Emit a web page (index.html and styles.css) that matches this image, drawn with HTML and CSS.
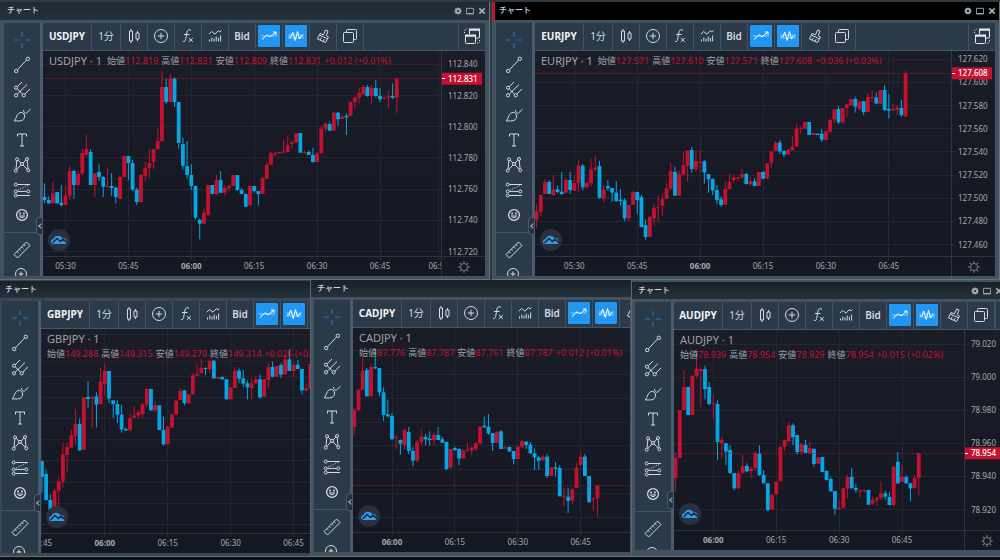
FILE: index.html
```html
<!DOCTYPE html>
<html lang="en">
<head>
<meta charset="utf-8">
<title>チャート</title>
<link rel="stylesheet" href="styles.css">
</head>
<body>
<svg class="sprite" aria-hidden="true">
  <defs>
    <symbol id="i-cross" viewBox="-9 -9 18 18"><path d="M-8 0H-3M3 0H8M0-8V-3M0 3V8"/></symbol>
    <symbol id="i-line" viewBox="-9 -9 18 18"><path d="M-4.5 4.7L4.5-4.9"/><circle cx="-5.8" cy="6" r="1.7"/><circle cx="5.8" cy="-6.2" r="1.7"/></symbol>
    <symbol id="i-fork" viewBox="-9 -9 18 18"><path d="M-4.7-3.4L0-8M-4.8-1.2L.6 4.2M-4.8 4.2L5-5.5M3 4L8-1.2M-2 2L-2 1"/><circle cx="-6" cy="-2.3" r="1.6"/><circle cx="-6" cy="5.3" r="1.6"/><circle cx="1.7" cy="5.3" r="1.6"/></symbol>
    <symbol id="i-brush" viewBox="-9 -9 18 18"><path d="M-8 5.8C-5 4-6-2.6-.4-2.6C3.4-1.6 3.6 3.4 0 5.4C-2 6.2-5 6-8 5.8ZM1.5-5C1.5-2.5 3-1.2 4.5-2L8.5-5.8"/></symbol>
    <symbol id="i-text" viewBox="-9 -9 18 18"><path d="M-4.5-3.5V-6H4.5V-3.5M0-6V6M-2 6H2"/></symbol>
    <symbol id="i-pattern" viewBox="-9 -9 18 18"><path d="M-6 4.2L-5.2-4.2M-3.9-4.9L-1.2-2M1.2-2L3.9-5M5.2-4.5L6.1 3.9M-5.2 4.6L-1-.2M1-.2L5.2 4.3"/><circle cx="-6.3" cy="5.7" r="1.5"/><circle cx="-5" cy="-5.7" r="1.5"/><circle cx="0" cy="-1.1" r="1.5"/><circle cx="5" cy="-6" r="1.5"/><circle cx="6.3" cy="5.3" r="1.5"/></symbol>
    <symbol id="i-forecast" viewBox="-9 -9 18 18"><path d="M-4.8-5.5H8M-4.8 1.4H4.8M-4.8 5.5H8"/><path stroke-dasharray="1 1.5" d="M-4 0L6-4.5"/><circle cx="-6.3" cy="-5.5" r="1.5"/><circle cx="-6.3" cy="1.4" r="1.5"/><circle cx="-6.3" cy="5.5" r="1.5"/><circle cx="6.3" cy="1.4" r="1.5"/></symbol>
    <symbol id="i-smile" viewBox="-9 -9 18 18"><circle r="5.4" stroke-width="1.3"/><path d="M-2.7 1Q0 4.5 2.7 1Z"/><path stroke-width="1.6" d="M-1.9-2.4V-.6M1.9-2.4V-.6"/></symbol>
    <symbol id="i-ruler" viewBox="-9 -9 18 18"><path d="M-8 4.5L4.5-8L8-4.5L-4.5 8ZM-5 1.5L-3.5 3M-2.7-.8L-1.2.7M-.4-3.1L1.1-1.6M1.9-5.4L3.4-3.9"/></symbol>
    <symbol id="i-zoom" viewBox="-9 -9 18 18"><circle cx="-1" cy="-1" r="5.5"/><path d="M-1-3.5V1.5M-3.5-1H1.5M3 3L7 7"/></symbol>
    <symbol id="i-candles" viewBox="-9 -9 18 18"><path d="M-4.5-5H-1.5V5H-4.5ZM-3-7V-5M-3 5V7M2-3H5V3H2ZM3.5-5V-3M3.5 3V5"/></symbol>
    <symbol id="i-plus" viewBox="-9 -9 18 18"><circle r="6.5"/><path d="M-3.2 0H3.2M0-3.2V3.2"/></symbol>
    <symbol id="i-fx" viewBox="-9 -9 18 18"><path d="M3-5.6C1.5-7-.6-6.4-1-4L-2.4 3.5C-2.8 5.8-4 6-5.2 5.2M-4-1.5H1.5M.8 2L4.8 5.8M4.800 2L.8 5.8"/></symbol>
    <symbol id="i-indicator" viewBox="-9 -9 18 18"><path d="M-6.2-1.8L-3.400-4.500L0-1.800L3.500-5.500L4.800-4L6.400-5.500M-5.500 3.500V5.500M-3.200 1.500V5.500M-1 2.500V5.500M1.200.5V5.500M3.400 1.800V5.500M5.600-.5V5.500"/></symbol>
    <symbol id="i-trend" viewBox="-9 -9 18 18"><path opacity=".5" d="M-8 0H8"/><path d="M-7 3.500L-2-1.200L1 .8L7-4M4-4H7V-1"/></symbol>
    <symbol id="i-pulse" viewBox="-9 -9 18 18"><path opacity=".4" d="M-8-1H8M-8 2H8"/><path d="M-7 1H-5L-3.300-4L-.8 4.500L1.500-4.500L3.500 3L5 0H7"/></symbol>
    <symbol id="i-format" viewBox="-9 -9 18 18"><path d="M-5.500 3L-3-2.500L.5-1.200L2.500-6L5-5L3.300-.3L5.500 1L2.500 6.500ZM-3.400-.8L4.400 2.800M-3 4L-1.700 1.800M0 5.200L1.200 3.200"/></symbol>
    <symbol id="i-copy" viewBox="-9 -9 18 18"><rect x="-6.500" y="-3.500" width="10" height="10" rx="1"/><path d="M-3.500-3.500V-5.500Q-3.500-6.500-2.500-6.500H5.500Q6.500-6.500 6.500-5.500V2.500Q6.500 3.500 5.500 3.500H3.500"/></symbol>
    <symbol id="i-restore" viewBox="-9 -9 18 18"><path d="M-6.500 0H3.500V6.500Q3.500 7.500 2.500 7.500H-5.500Q-6.500 7.500-6.500 6.500ZM-2.500-2V-6H7.500V1Q7.500 2 6.500 2H4"/><path stroke-width="2" d="M-7-.5H4M-3-6.500H8"/><path stroke-dasharray="1 1" d="M-7.500-3V-5.500L-4.500-7.500M5 7.500L7.500 6V3.500"/></symbol>
    <symbol id="i-gear" viewBox="-9 -9 18 18"><circle r="4.500" stroke-width="4"/><path stroke-width="3" d="M0-8V-5M0 5V8M-8 0H-5M5 0H8M-5.700-5.700L-4-4M4 4L5.700 5.700M5.700-5.700L4-4M-4 4L-5.700 5.700"/></symbol>
    <symbol id="i-box" viewBox="-9 -9 18 18"><path stroke-width="2" d="M-8-6H8V6H-8Z"/><path stroke-width="3" d="M-8 6H8"/></symbol>
    <symbol id="i-close" viewBox="-9 -9 18 18"><path stroke-width="4" d="M-6-6L6 6M6-6L-6 6"/></symbol>
    <symbol id="i-sun" viewBox="-9 -9 18 18"><circle r="4.500" stroke-width="1.200"/><path stroke-width="1.500" d="M0-7.500V-5M0 5V7.500M-7.500 0H-5M5 0H7.500M-5.300-5.300L-3.700-3.700M3.700 3.700L5.300 5.300M5.300-5.300L3.700-3.700M-3.700 3.700L-5.300 5.300"/></symbol>
    <symbol id="i-cloud" viewBox="-9 -9 18 18"><path class="cloud" d="M-6 4C-9 3.500-8.500-.5-5.500-1C-4.500-5 1-5.500 3-2.200C6-3 9 1 7 4Z"/><path class="cloud-line" d="M-6.500 3L-2-1.500L1.500 1.500L4-1L8 2.800"/></symbol>
  </defs>
</svg>
<main class="desktop">
  <div class="row row-top" id="top"></div>
  <div class="row row-bottom" id="bottom"></div>
</main>
<script src="script.js"></script>
</body>
</html>
```
FILE: styles.css
```css
* { box-sizing: border-box; }

body {
  margin: 0;
  background: #0c1116;
  color: #d5dae0;
  font-family: "Noto Sans", "Noto Sans CJK JP", sans-serif;
  font-size: 10px;
  line-height: 1;
}

button {
  margin: 0;
  padding: 0;
  border: 0;
  background: none;
  color: inherit;
  font: inherit;
}

.sprite { position: absolute; width: 0; height: 0; }

.icon {
  display: block;
  width: 18px;
  height: 18px;
  fill: none;
  stroke: currentColor;
  stroke-width: 1;
}

.desktop {
  display: grid;
  grid-template-rows: 1fr 1fr;
  height: 100vh;
  overflow: hidden;
}

.row { display: grid; min-height: 0; }
.row-top { grid-template-columns: 490fr 508fr; gap: 2px; background: #2d3943; padding-top: 2px; }
.row-bottom { grid-template-columns: 310fr 321fr 369fr; padding-bottom: 3px; }

.window {
  display: flex;
  flex-direction: column;
  min-width: 0;
  min-height: 0;
  overflow: hidden;
  background: #425261;
  border-bottom: 1px solid #66737e;
}

.titlebar {
  display: flex;
  flex: none;
  align-items: center;
  height: 17px;
  padding: 0 1px 0 7px;
  background: linear-gradient(#1e2933, #24313c);
}
.row-top .titlebar { height: 18px; }
.row-top .window { border-right: 1px solid #66737e; }
.row-bottom .titlebar { background: linear-gradient(#182127, #24313c); }

.titlebar h2 {
  flex: 1;
  margin: 0;
  font-family: "Noto Sans CJK JP", sans-serif;
  font-size: 8px;
  font-weight: 500;
  line-height: 14px;
  padding-bottom: 2px;
}
.titlebar button { width: 12px; height: 12px; padding: 2px; color: #a5abb0; }
.titlebar .icon { width: 8px; height: 8px; stroke-width: 2; }

.body {
  display: flex;
  flex: 1;
  min-height: 0;
  padding: 3px 4px 3px 4px;
}

.active .titlebar { background: #000; padding-left: 4px; border-left: 3px solid #c5112f; }

.gbpjpy { padding-top: 1px; background: #384755; }
.gbpjpy .titlebar { padding-left: 5px; }
.gbpjpy .body { padding-left: 2px; padding-right: 0; }
.cadjpy, .audjpy { border-left: 1px solid #5a6873; }
.cadjpy .titlebar, .audjpy .titlebar { padding-left: 6px; }
.cadjpy .body { padding: 3px 1px 4px 3px; }
.audjpy { padding-top: 2px; }
.audjpy .titlebar, .audjpy .body { width: calc(100% + 8px); }
.audjpy .titlebar { padding-right: 3px; }
.audjpy .body { padding: 3px 0 6px 3px; }

.tools {
  position: relative;
  flex: none;
  width: 39px;
  padding-top: 4px;
  border-right: 3px solid #4b5c70;
  background: #2a3a49;
}
.tool-list { height: 100%; overflow: hidden; }
.tools .tool {
  display: flex;
  align-items: center;
  justify-content: center;
  width: 35px;
  height: 25px;
}
.tools .tool:first-child { color: #2064a8; }
.tools .tool:first-child .icon { stroke-width: 1.500; }
.tools hr { height: 1px; margin: 5px 0 4px; border: 0; background: #44566a; }

.collapse {
  position: absolute;
  right: -3px;
  bottom: 41px;
  width: 7px;
  height: 18px;
  border: 1px solid #4b5c70;
  border-radius: 3px 0 0 3px;
  background: #25323e;
}
.collapse::before {
  content: "";
  display: block;
  width: 3px;
  height: 3px;
  margin-left: 2px;
  border: solid #a8b0b8;
  border-width: 0 0 1px 1px;
  transform: rotate(45deg);
}

.main {
  display: flex;
  flex: 1;
  flex-direction: column;
  min-width: 0;
}

.toolbar {
  display: flex;
  flex: none;
  height: 28px;
  overflow: hidden;
  background: #2a3a49;
  border-bottom: 1px solid #44566a;
}
.toolbar button {
  display: flex;
  flex: none;
  align-items: center;
  justify-content: center;
  width: 27px;
  padding-bottom: 1px;
  border-right: 1px solid #415264;
}
.toolbar .symbol { width: 49px; font-weight: 700; color: #f2f4f6; }
.toolbar .interval { width: 29px; }
.toolbar .bid { font-weight: 600; }
.toolbar .on span {
  display: flex;
  align-items: center;
  justify-content: center;
  width: 22px;
  height: 22px;
  border-radius: 1px;
  background: #2196f3;
  color: #fff;
}
.toolbar .restore { margin-left: auto; border-left: 1px solid #415264; border-right: 0; color: #e4e8eb; }

.chart {
  position: relative;
  display: grid;
  flex: 1;
  grid-template-columns: minmax(0, 1fr) 44px;
  grid-template-rows: minmax(0, 1fr) 20px;
  min-height: 0;
  background: linear-gradient(#1a1c27, #141822);
}
.chart.no-scale { grid-template-columns: minmax(0, 1fr); }

.chart svg { display: block; }
.plot, .times, .prices { width: 100%; height: 100%; overflow: hidden; }
.prices { border-left: 1px solid #30343f; }
.times { border-top: 1px solid #30343f; }
.corner {
  display: flex;
  align-items: center;
  justify-content: center;
  border-top: 1px solid #30343f;
  border-left: 1px solid #30343f;
  color: #7d828b;
}
.corner .icon { width: 14px; height: 14px; }

.grid { stroke: #232731; stroke-width: 1; }
.last { stroke: #b01530; stroke-dasharray: 1 1; opacity: .8; }
.gbpjpy .last { opacity: .4; }
.up { fill: #c5112f; }
.down { fill: #06a6e4; }
.axis { fill: #a4a8b0; font-size: 8px; }
.axis-hour { font-weight: 700; }
.tag { fill: #c5112f; }
.tag-text { fill: #fff; font-size: 8px; font-weight: 500; }
.tag-tick { stroke: #fff; }

.legend {
  position: absolute;
  top: 2px;
  left: 6px;
  right: 44px;
  display: flex;
  flex-wrap: wrap;
  align-items: center;
  column-gap: 5px;
  white-space: nowrap;
  color: #9fa2aa;
}
.no-scale .legend { right: 0; }
.legend h3 { margin: 0; font-size: 11px; font-weight: 400; line-height: 16px; }
.legend dl { display: flex; margin: 0; font-size: 9px; line-height: 14px; }
.legend dt { font-family: "Noto Sans CJK JP", sans-serif; }
.legend dd { margin: 0 3px 0 0; color: #c5112f; }

.logo {
  position: absolute;
  left: 5px;
  bottom: 25px;
  display: flex;
  align-items: center;
  justify-content: center;
  width: 22px;
  height: 22px;
  border-radius: 50%;
  background: #2c303e;
}
.cloud { fill: #2f9bea; stroke: none; }
.cloud-line { stroke: #1d2634; stroke-width: 1.500; }
```
FILE: script.js
```js
// Each candle is "high,top,bottom,low" plus r (rise) or b (fall).
// Heights are in thirds of a pixel, x positions are spaced one minute apart.
const MINUTE = 12.58;

const charts = [
  { id: 'usdjpy', name: 'USDJPY', row: 'top', ox: 43, oy: 51, zero: 196.5, first: -5, base: 0,
    start: 330, hours: [330, 345, 360, 375, 390, 405, 419], prices: { y: 64.3, step: 31.2, from: 112.84, count: 7 },
    last: 78.7, price: '112.831', ohlc: ['112.819', '112.831', '112.809', '112.831'], change: '+0.012 (+0.01%)',
    data: `550,591,600,610b 589,600,610,612b 545,580,610,610r 576,576,610,610b 555,608,615,620b 559,587,615,615r 497,513,587,600r 508,513,555,597b 512,522,555,558r 447,459,520,526r 404,447,465,470r 448,456,555,555b 520,520,555,591r 493,516,531,542b 528,531,560,591b 502,558,560,560r 519,558,564,587b 560,563,591,610b 527,531,597,597r 468,468,531,531r 468,468,489,540b 480,489,569,572b 563,569,606,615b 523,525,606,610r 485,504,527,544r 447,489,504,536r 447,447,485,507r 385,423,447,451r 213,261,423,426r 236,261,306,312b 222,236,306,306r 232,236,306,321b 305,306,429,446b 413,432,498,508b 423,498,525,536b 493,525,558,570b 557,558,653,658b 655,660,671,718b 622,638,671,671r 554,555,644,648r 555,555,582,582b 525,540,582,584r 513,540,578,580b 556,564,578,586r 554,558,564,573r 524,525,558,558r 525,525,570,573b 564,570,582,582b 580,582,620,620b 558,558,615,620r 558,558,573,578b 573,573,582,616b 530,535,582,582r 484,494,537,537r 456,460,494,494r 455,460,462,468r 456,456,460,460r 418,455,458,458r 408,436,456,456r 420,427,432,445r 400,400,428,428r 399,399,458,458b 452,456,458,460r 451,456,465,465b 443,465,486,488b 455,460,486,488r 378,386,460,460r 366,372,386,395r 364,372,392,394b 338,338,392,392r 336,338,358,377b 345,350,357,357r 340,347,352,405b 304,306,348,348r 291,292,306,326r 264,279,292,310r 255,261,283,283r 255,261,288,290b 255,264,288,312r 240,264,288,292b 264,288,298,306b 290,292,296,298r 272,288,292,325r 250,288,293,297b 234,236,293,339r` },
  { id: 'eurjpy', name: 'EURJPY', row: 'top', active: true, ox: 535, oy: 51, zero: 1723, first: -9, base: 420,
    start: 330, hours: [330, 345, 360, 375, 390, 405], prices: { y: 59.3, step: 23.15, from: 127.62, count: 9 },
    last: 73.3, price: '127.608', ohlc: ['127.571', '127.610', '127.571', '127.608'], change: '+0.036 (+0.03%)',
    data: `193,213,239,263r 165,165,215,228r 117,126,162,162r 120,126,162,162b 105,148,166,166r 136,148,156,160b 96,155,162,165b 113,120,158,160r 95,120,150,162b 107,129,152,153r 61,77,129,156r 72,77,142,151b 124,129,142,146r 55,88,130,140r 47,83,88,96r 62,78,173,177b 135,148,176,187r 120,138,145,152b 143,144,158,186b 123,158,183,186b 147,179,183,197b 174,181,235,243b 195,195,235,243r 151,156,195,195r 155,156,180,222b 165,171,261,262b 238,255,291,299b 228,231,291,291r 192,204,235,256r 166,202,205,246r 160,177,198,228r 129,144,177,177r 67,93,146,152r 80,96,167,167b 93,102,167,167r 36,75,104,104r 31,32,77,124r 21,30,87,98b 31,63,87,96r 31,66,68,98r 60,64,97,131b 102,102,118,158b 115,117,151,165b 135,150,180,192b 169,178,195,201b 125,147,194,194r 100,126,148,148r 103,112,120,127r 110,112,114,124r 87,103,112,117r 98,102,132,133b 112,124,132,138r 114,124,138,138b 96,96,138,138r 94,96,116,118b 70,70,114,118r 34,34,68,83r 3,8,33,33r 0,8,34,42b 31,33,44,50b 24,30,44,44r -12,20,31,31r -46,-34,20,20r -40,-37,-34,-20r -55,-54,-34,-34r -54,-54,-15,-15b -22,-21,-15,-15r -20,-19,-15,-15b -33,-19,-1,6b -28,-27,0,0r -65,-60,-25,-20r -92,-92,-62,-50r -102,-93,-53,-48b -96,-96,-53,-48r -107,-107,-96,-68r -124,-123,-104,-104r -130,-123,-100,-82b -117,-116,-92,-88r -117,-116,-84,-74b -142,-129,-84,-84r -148,-129,-127,-114r -142,-128,-109,-109b -150,-150,-109,-109r -165,-150,-90,-88b -138,-93,-88,-64b -110,-92,-90,-86r -102,-98,-90,-75r -120,-96,-75,-70b -207,-200,-70,-70r` },
  { id: 'gbpjpy', name: 'GBPJPY', row: 'bottom', ox: 41, oy: 329, zero: 314.5, first: -15, base: 840, noScale: true,
    start: 360, hours: [345, 360, 375, 390, 405], prices: { y: 334, step: 21.15, count: 10 },
    last: 361.5, ohlc: ['149.288', '149.315', '149.279', '149.314'], change: '+0.026 (+0.02%)',
    data: `543,543,591,638b 568,582,660,662b 643,660,690,700b 626,632,690,700r 591,604,632,690r 488,523,604,622r 487,501,525,578r 449,465,503,503r 387,432,468,494r 416,432,511,512b 352,352,509,509r 303,351,357,383b 347,352,356,445r 337,349,374,442b 264,305,372,374r 253,273,312,349r 273,273,356,370b 361,361,372,413b 361,372,404,429b 374,404,448,458b 442,447,451,453b 401,415,451,451r 378,406,413,413r 390,397,406,417r 370,372,402,412r 324,327,374,382r 327,327,391,392b 364,376,391,397r 376,376,450,450b 410,450,493,497b 438,441,493,493r 402,404,443,443r 360,362,404,404r 324,333,360,360r 331,331,369,376b 342,343,370,370r 280,286,343,343r 253,281,287,287r 238,264,280,280r 262,264,267,285b 239,242,268,278r 240,242,295,295b 289,292,296,296r 289,291,298,298b 298,298,358,358b 322,322,358,358r 262,273,324,324r 265,272,296,310b 269,295,311,322b 301,310,322,358b 294,310,324,358r 287,298,310,310r 284,298,352,356b 296,298,350,350r 250,262,300,324r 245,261,290,292b 258,258,290,290r 250,255,284,294b 222,238,284,284r 207,238,273,273b 250,255,273,290r 240,254,267,267b 267,267,331,343b 312,326,332,332r 250,252,326,326r` },
  { id: 'cadjpy', name: 'CADJPY', row: 'bottom', ox: 353, oy: 328, zero: 1176, first: -9, base: 840, noScale: true,
    start: 360, hours: [360, 375, 390, 405], prices: { y: 350.7, step: 23.8, count: 8 },
    last: 485.5, ohlc: ['87.776', '87.787', '87.761', '87.787'], change: '+0.012 (+0.01%)',
    data: `384,390,441,466r 325,330,391,391r 232,273,330,330r 264,270,349,349b 250,261,349,349r 205,261,265,267b 264,264,337,349b 322,337,405,423b 361,403,409,413b 399,408,478,478b 465,470,473,508r 478,480,491,524b 446,450,495,508r 441,456,513,522b 501,513,542,559b 480,486,542,546r 446,471,486,496r 462,471,478,495b 454,476,480,496b 457,465,481,496r 441,465,480,480b 470,478,488,489b 484,486,567,571b 507,507,563,563r 500,504,510,513b 505,507,535,556b 508,512,535,536r 489,508,512,514r 500,502,511,526r 486,489,507,513r 440,440,491,491r 410,437,442,442b 402,440,460,465b 459,459,489,513b 453,456,489,489r 450,454,507,507b 498,503,506,506r 500,501,514,516b 513,513,537,553b 500,500,537,537r 480,483,502,502r 483,485,495,507b 486,494,520,522b 505,520,532,570b 528,532,542,570b 524,530,541,541r 522,530,588,594b 561,563,588,588r 546,562,566,590b 555,564,649,649b 624,647,650,679r 625,650,662,699b 626,628,662,673r 550,563,624,624r 519,530,555,555r 522,530,588,588b 588,588,667,667b 652,656,659,691r 616,616,656,710r` },
  { id: 'audjpy', name: 'AUDJPY', row: 'bottom', ox: 674, oy: 330, zero: 2140, first: -9, base: 840,
    start: 360, hours: [360, 375, 390, 405], prices: { y: 344, step: 33.1, from: 79.02, count: 6 },
    last: 453.3, price: '78.954', ohlc: ['78.939', '78.954', '78.929', '78.954'], change: '+0.015 (+0.02%)',
    data: `519,534,594,634r 390,390,534,534r 272,321,390,390r 321,321,405,405b 286,288,405,405r 209,267,288,292r 261,267,273,381r 257,267,327,358b 306,321,372,376b 345,370,373,417r 361,372,486,540b 471,480,490,535r 489,490,515,555b 495,510,579,582b 579,579,625,630b 572,580,625,628r 525,559,579,581r 550,558,574,576b 561,565,573,593r 513,520,564,573r 495,520,585,588b 570,585,610,610b 609,610,690,694b 642,645,688,688r 605,605,643,645r 498,501,604,604r 480,480,500,512r 427,436,484,484r 430,436,472,495b 465,465,516,524b 489,493,516,522r 480,495,519,519b 486,504,520,520r 505,507,552,560b 531,532,551,551r 530,531,576,576b 570,573,600,602b 590,597,634,634b 633,633,686,704b 658,684,688,688r 625,625,684,684r 585,591,626,654r 564,591,624,628b 613,624,630,638b 630,631,635,654r 628,630,633,640r 630,630,674,674b 650,660,670,676r 650,654,660,680r 604,640,654,660r 632,640,650,660b 636,651,675,675b 559,560,675,678r 516,545,610,612b 556,591,606,606r 586,591,610,612b 609,610,625,664b 585,594,624,626r 519,519,594,645r` }
];

const icon = name => `<svg class="icon" aria-hidden="true"><use href="#i-${name}"/></svg>`;
const button = (cls, name, label) => `<button type="button" class="${cls}" aria-label="${label}">${icon(name)}</button>`;
const toggle = (name, label) => `<button type="button" class="on" aria-pressed="true" aria-label="${label}"><span>${icon(name)}</span></button>`;
const clock = m => String(Math.floor(m / 60)).padStart(2, '0') + ':' + String(m % 60).padStart(2, '0');

const tools = ['cross', 'line', 'fork', 'brush', 'text', 'pattern', 'forecast', 'smile'];

function plot(c) {
  const xAt = minute => (c.zero + (minute - c.start) * MINUTE) / 3 - c.ox;
  let out = '';
  c.hours.forEach(m => { const x = Math.floor(xAt(m)) + .5; out += `<path class="grid" d="M${x} 0V999"/>`; });
  for (let i = 0; i < c.prices.count; i++) {
    const y = Math.round(c.prices.y + i * c.prices.step - c.oy - .5) + .5;
    out += `<path class="grid" d="M0 ${y}H2000"/>`;
  }
  c.data.split(' ').forEach((item, i) => {
    const cls = item.endsWith('r') ? 'up' : 'down';
    const [hi, top, bottom, low] = item.slice(0, -1).split(',').map(v => (+v + c.base) / 3 - c.oy);
    const x = xAt(c.start + c.first + i);
    out += `<rect class="${cls}" x="${x - .5}" y="${hi}" width="1" height="${low - hi}"/>`;
    out += `<rect class="${cls}" x="${x - 1.9}" y="${top}" width="3.8" height="${Math.max(1, bottom - top)}"/>`;
  });
  const y = Math.floor(c.last - c.oy) + .5;
  return out + `<path class="last" d="M0 ${y}H2000"/>`;
}

function times(c) {
  return c.hours.map(m => {
    const x = (c.zero + (m - c.start) * MINUTE) / 3 - c.ox;
    return `<path class="grid" d="M${Math.floor(x) + .5} 0V3"/><text class="axis${m === 360 ? ' axis-hour' : ''}" x="${x}" y="12" text-anchor="middle">${clock(m)}</text>`;
  }).join('');
}

function prices(c) {
  let out = '';
  for (let i = 0; i < c.prices.count; i++) {
    const y = c.prices.y + i * c.prices.step - c.oy;
    out += `<path class="grid" d="M0 ${Math.round(y - .5) + .5}H3"/><text class="axis" x="6" y="${y + 3}">${(c.prices.from - i * .02).toFixed(3)}</text>`;
  }
  const y = c.last - c.oy;
  return out + `<rect class="tag" x="-1" y="${y - 6}" width="41" height="12"/><path class="tag-tick" d="M0 ${Math.floor(y) + .5}H3"/><text class="tag-text" x="6" y="${y + 3}">${c.price}</text>`;
}

function render(c) {
  const labels = ['始値', '高値', '安値', '終値'];
  return `<section class="window ${c.id}${c.active ? ' active' : ''}">
    <header class="titlebar"><h2>チャート</h2>${c.noScale ? '' : button('', 'gear', '設定') + button('', 'box', '最大化') + button('', 'close', '閉じる')}</header>
    <div class="body">
      <nav class="tools"><div class="tool-list">${tools.map(t => button('tool', t, t)).join('')}<hr>${button('tool', 'ruler', 'ruler')}${button('tool', 'zoom', 'zoom')}</div>
        <button type="button" class="collapse" aria-label="collapse"></button></nav>
      <div class="main">
        <div class="toolbar">
          <button type="button" class="symbol">${c.name}</button><button type="button" class="interval">1分</button>
          ${button('', 'candles', 'candles')}${button('', 'plus', 'compare')}${button('', 'fx', 'indicators')}${button('', 'indicator', 'templates')}
          <button type="button" class="bid">Bid</button>
          ${toggle('trend', 'trend')}${toggle('pulse', 'pulse')}${button('', 'format', 'format')}${button('', 'copy', 'copy')}${button('restore', 'restore', 'restore')}
        </div>
        <div class="chart${c.noScale ? ' no-scale' : ''}">
          <svg class="plot">${plot(c)}</svg>${c.noScale ? '' : `<svg class="prices">${prices(c)}</svg>`}
          <svg class="times">${times(c)}</svg>${c.noScale ? '' : button('corner', 'sun', 'scale settings')}
          <div class="legend"><h3>${c.name} · 1</h3><dl>${labels.map((l, i) => `<dt>${l}</dt><dd>${c.ohlc[i]}</dd>`).join('')}<dd>${c.change}</dd></dl></div>
          <div class="logo">${icon('cloud')}</div>
        </div>
      </div>
    </div>
  </section>`;
}

charts.forEach(c => document.getElementById(c.row).insertAdjacentHTML('beforeend', render(c)));
```
